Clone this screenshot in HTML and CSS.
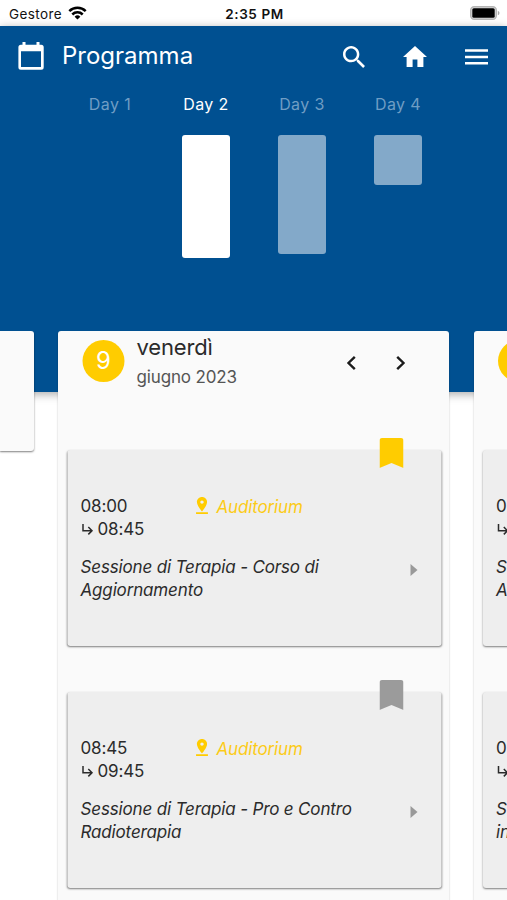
FILE: index.html
```html
<!DOCTYPE html>
<html lang="it">
<head>
<meta charset="utf-8">
<title>Programma</title>
<link rel="stylesheet" href="styles.css">
</head>
<body>
<svg class="defs" width="0" height="0" aria-hidden="true">
  <symbol id="bookmark" viewBox="0 0 24 30"><path d="M2.500 0h19A2.500 2.500 0 0 1 24 2.500V30L12 25 0 30V2.500A2.500 2.500 0 0 1 2.500 0z"/></symbol>
  <symbol id="pin" viewBox="5 2 14 20"><path d="M18 8c0-3.310-2.690-6-6-6S6 4.690 6 8c0 4.500 6 11 6 11s6-6.500 6-11zm-8 0c0-1.100.900-2 2-2s2 .900 2 2-.890 2-2 2c-1.100 0-2-.900-2-2zM5 20v2h14v-2H5z"/></symbol>
  <symbol id="turn" viewBox="0 0 12 12"><path d="M1.500 0v6.700h9M6.800 3l3.700 3.700-3.700 3.700" fill="none" stroke="currentColor" stroke-width="1.500"/></symbol>
</svg>
<div class="status">
  <div class="carrier"><span>Gestore</span>
    <svg width="19" height="14" viewBox="0 0 19 14"><g fill="none" stroke="#000" stroke-width="2.500"><path d="M1.300 5.100a11.700 11.700 0 0 1 16.400 0"/><path d="M4.300 8.500a7.400 7.400 0 0 1 10.400 0"/></g><path d="M6.600 10.700a4.100 4.100 0 0 1 5.800 0L9.500 13.600z"/></svg>
  </div>
  <div class="clock">2:35 PM</div>
  <svg class="battery" width="30" height="14" viewBox="0 0 30 14"><rect x=".7" y=".7" width="25.600" height="12.600" rx="3.500" fill="#ddd" stroke="#b5b5b5" stroke-width="1.400"/><rect x="2.300" y="2.300" width="22.400" height="9.400" rx="1.500"/><path d="M27.800 4.700v4.600q1.700-.7 1.700-2.300t-1.700-2.300z" fill="#aaa"/></svg>
</div>
<header class="hero">
  <div class="bar">
    <svg class="cal" width="26" height="28" viewBox="0 0 26 28"><path fill="#fff" fill-rule="evenodd" d="M4.500 0h3v2.800h11V0h3v2.800h1.700A2.500 2.500 0 0 1 25.700 5.300v19.900a2.500 2.500 0 0 1-2.500 2.500H2.900A2.500 2.500 0 0 1 .4 25.200V5.300A2.500 2.500 0 0 1 2.900 2.800h1.600zM3 9.300v15.800h20V9.300z"/></svg>
    <h1>Programma</h1>
    <div class="actions">
      <svg width="22" height="22" viewBox="3 3 17.500 17.500"><path fill="#fff" d="M15.500 14h-.790l-.280-.270C15.410 12.590 16 11.110 16 9.500 16 5.910 13.090 3 9.500 3S3 5.910 3 9.500 5.910 16 9.500 16c1.610 0 3.090-.590 4.230-1.570l.270.280v.790l5 4.990L20.490 19l-4.990-5zm-6 0C7.010 14 5 11.990 5 9.500S7.010 5 9.500 5 14 7.010 14 9.500 11.990 14 9.500 14z"/></svg>
      <svg width="24" height="21" viewBox="2 3 20 17" preserveAspectRatio="none"><path fill="#fff" d="M10 20v-6h4v6h5v-8h3L12 3 2 12h3v8z"/></svg>
      <svg width="23" height="16" viewBox="0 0 23 16"><path fill="#fff" d="M0 .3h23v2.500H0zm0 6.400h23v2.500H0zm0 6.300h23v2.500H0z"/></svg>
    </div>
  </div>
  <div class="days">
    <div class="day"><span>Day 1</span></div>
    <div class="day active"><span>Day 2</span><i class="col tall"></i></div>
    <div class="day"><span>Day 3</span><i class="col mid"></i></div>
    <div class="day"><span>Day 4</span><i class="col low"></i></div>
  </div>
</header>
<main class="carousel">
  <section class="panel prev"></section>
  <section class="panel">
    <div class="head">
      <div class="num">9</div>
      <div class="date"><div class="weekday">venerdì</div><div class="month">giugno 2023</div></div>
      <div class="nav">
        <svg width="10" height="16" viewBox="0 0 10 16"><path d="M8.300 1.800L2 8l6.300 6.200" fill="none" stroke="#1b1b1b" stroke-width="2.400"/></svg>
        <svg width="10" height="16" viewBox="0 0 10 16"><path d="M1.700 1.800L8 8l-6.300 6.200" fill="none" stroke="#1b1b1b" stroke-width="2.400"/></svg>
      </div>
    </div>
    <article class="card">
      <svg class="mark on"><use href="#bookmark"/></svg>
      <div class="info">
        <div class="times"><div>08:00</div><div class="end"><svg><use href="#turn"/></svg>08:45</div></div>
        <div class="room"><svg><use href="#pin"/></svg><em>Auditorium</em></div>
      </div>
      <div class="topic"><em>Sessione di Terapia - Corso di<br>Aggiornamento</em><i class="more"></i></div>
    </article>
    <article class="card">
      <svg class="mark"><use href="#bookmark"/></svg>
      <div class="info">
        <div class="times"><div>08:45</div><div class="end"><svg><use href="#turn"/></svg>09:45</div></div>
        <div class="room"><svg><use href="#pin"/></svg><em>Auditorium</em></div>
      </div>
      <div class="topic"><em>Sessione di Terapia - Pro e Contro<br>Radioterapia</em><i class="more"></i></div>
    </article>
  </section>
  <section class="panel next">
    <div class="head"><div class="num"></div></div>
    <article class="card">
      <div class="info"><div class="times"><div>0</div><div class="end"><svg><use href="#turn"/></svg></div></div></div>
      <div class="topic"><em>S<br>A</em></div>
    </article>
    <article class="card">
      <div class="info"><div class="times"><div>0</div><div class="end"><svg><use href="#turn"/></svg></div></div></div>
      <div class="topic"><em>S<br>in</em></div>
    </article>
  </section>
</main>
</body>
</html>
```
FILE: styles.css
```css
* { box-sizing: border-box; }
html { overflow: hidden; }
body { margin: 0; width: 507px; height: 900px; overflow: hidden; background: #fff; color: #2b2b2b; font-family: Inter, "Liberation Sans", sans-serif; font-size: 16px; }
svg { display: block; flex: none; }
.defs { position: absolute; }
.status { height: 26px; padding: 0 7px 0 9px; display: grid; grid-template-columns: 1fr auto 1fr; align-items: center; color: #111; font-size: 13.5px; line-height: 26px; }
.carrier { display: flex; align-items: center; gap: 6px; letter-spacing: .4px; padding-top: 1px; }
.carrier svg { margin-top: -3px; }
.clock { font-weight: 600; letter-spacing: .6px; padding-top: 1px; }
.battery { justify-self: end; margin-top: -1px; }
.hero { height: 366px; background: #005091; color: #fff; box-shadow: 0 2px 9px rgba(0,0,0,.35); }
.bar { height: 61px; padding: 0 19px 0 18px; display: flex; align-items: center; }
.cal { margin-top: -2px; }
h1 { margin: -1px 0 0 18px; font-size: 24px; line-height: 60px; font-weight: 400; letter-spacing: 0; }
.actions { margin-left: auto; display: flex; align-items: center; gap: 38px; }
.days { display: flex; margin-left: 62px; }
.day { width: 96px; height: 200px; padding-top: 6px; display: flex; flex-direction: column; align-items: center; color: #6f9dc4; line-height: 22px; }
.day span { letter-spacing: .4px; }
.day.active { color: #fff; }
.col { width: 48px; margin-top: 20px; border-radius: 3px; background: #83a9c9; }
.active .col { background: #fff; }
.tall { height: 123px; }
.mid { height: 119px; }
.low { height: 50px; }
.carousel { display: flex; gap: 25px; width: 507px; height: 569px; margin-top: -61px; overflow: hidden; }
.panel { flex: none; width: 391px; height: 620px; padding: 0 8px 0 9px; background: #fafafa; border-radius: 3px; box-shadow: 0 1px 2px rgba(0,0,0,.25); }
.panel.prev { width: 34px; height: 120px; padding: 0; border-radius: 0 3px 3px 0; box-shadow: 0 1px 2px rgba(0,0,0,.5); }
.panel.next { width: 33px; padding-right: 0; border-radius: 3px 0 0 0; overflow: hidden; }
.panel.prev + .panel { width: 391px; margin-left: -1px; }
.head { height: 119px; padding: 3px 36px 0 15px; display: flex; align-items: flex-start; }
.num { flex: none; width: 42px; height: 42px; margin-top: 6px; border-radius: 50%; background: #fc0; color: #fff; font-size: 24px; line-height: 42px; text-align: center; }
.date { margin-left: 12px; }
.weekday { font-size: 22px; line-height: 27px; letter-spacing: -.15px; }
.month { font-size: 17px; line-height: 33px; letter-spacing: -.15px; color: #555; }
.nav { margin: 21px 0 0 auto; display: flex; gap: 39px; }
.card { position: relative; height: 196px; margin-bottom: 46px; padding: 45px 24px 0 13px; background: #eee; border-radius: 3px; box-shadow: 0 1px 2px rgba(0,0,0,.5); font-size: 17px; letter-spacing: -.15px; line-height: 23px; }
.panel.prev + .panel .head, .panel.prev + .panel .card { transform: translateX(.5px); }
.next .card { width: 373px; }
.mark { position: absolute; top: -12px; right: 38px; width: 24px; height: 30px; fill: #9b9b9b; }
.mark.on { fill: #fc0; }
.info { display: flex; height: 46px; }
.times { width: 115px; }
.end { display: flex; align-items: center; height: 23px; }
.end svg { width: 12px; height: 12px; margin: 0 4px 0 1px; }
.room { display: flex; height: 25px; align-items: center; gap: 8px; color: #fccb17; }
.room svg { width: 13px; height: 17px; margin-top: -4px; fill: #fc0; }
.topic { margin-top: 15px; display: flex; justify-content: space-between; align-items: flex-start; white-space: nowrap; }
.more { margin-top: 8px; border-left: 7px solid #999; border-top: 6px solid transparent; border-bottom: 6px solid transparent; }
```
